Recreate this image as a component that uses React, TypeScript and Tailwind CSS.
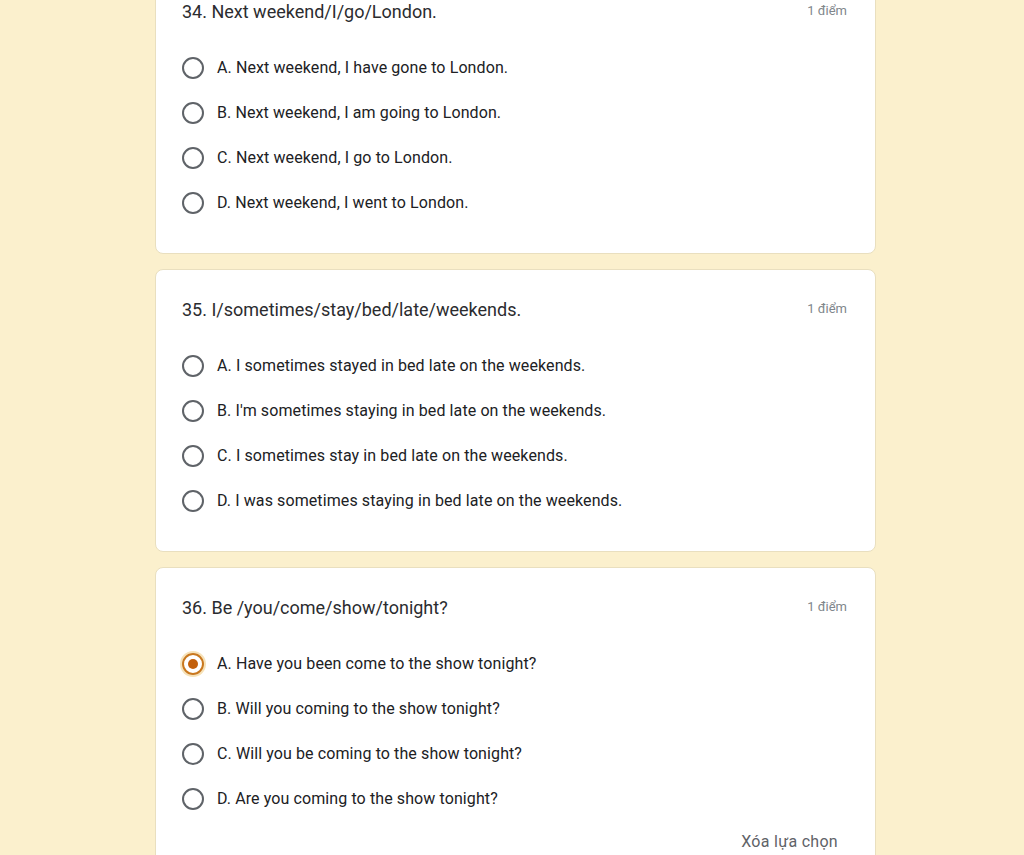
import React from 'react';

type Question = {
  title: string;
  options: string[];
  selected?: number;
};

const questions: Question[] = [
  {
    title: '34. Next weekend/I/go/London.',
    options: [
      'A. Next weekend, I have gone to London.',
      'B. Next weekend, I am going to London.',
      'C. Next weekend, I go to London.',
      'D. Next weekend, I went to London.',
    ],
  },
  {
    title: '35. I/sometimes/stay/bed/late/weekends.',
    options: [
      'A. I sometimes stayed in bed late on the weekends.',
      "B. I'm sometimes staying in bed late on the weekends.",
      'C. I sometimes stay in bed late on the weekends.',
      'D. I was sometimes staying in bed late on the weekends.',
    ],
  },
  {
    title: '36. Be /you/come/show/tonight?',
    options: [
      'A. Have you been come to the show tonight?',
      'B. Will you coming to the show tonight?',
      'C. Will you be coming to the show tonight?',
      'D. Are you coming to the show tonight?',
    ],
    selected: 0,
  },
];

const Radio: React.FC<{ checked: boolean }> = ({ checked }) =>
  checked ? (
    <span className="flex h-[22px] w-[22px] shrink-0 items-center justify-center rounded-full border-2 border-[#c9781e] shadow-[0_0_0_2px_#f6e2b8]">
      <span className="h-[10px] w-[10px] rounded-full bg-[#c2600c]" />
    </span>
  ) : (
    <span className="h-[22px] w-[22px] shrink-0 rounded-full border-2 border-[#5f6368]" />
  );

export default function App() {
  return (
    <div className="h-[855px] overflow-hidden bg-[#fbf0cd] font-['Roboto',sans-serif]">
      <div className="ml-[155px] mt-[-29px] flex w-[721px] flex-col gap-[15px]">
        {questions.map((q, qi) => (
          <div
            key={qi}
            className="rounded-[8px] border border-[#e9dfbf] bg-white pl-[26px] pr-[28px] pt-[27px] pb-[28px]"
          >
            <div className="flex h-[24px] items-center justify-between">
              <span className="text-[18px] text-[#2b2c2f]">{q.title}</span>
              <span className="text-[13px] text-[#80868b]">1 điểm</span>
            </div>
            <div className="mt-[22px] flex flex-col">
              {q.options.map((opt, oi) => (
                <div key={oi} className="flex h-[45px] items-center gap-[13px]">
                  <Radio checked={q.selected === oi} />
                  <span className="text-[16px] text-[#202124] tracking-[0.1px]">{opt}</span>
                </div>
              ))}
            </div>
            {q.selected !== undefined && (
              <div className="mt-[9px] flex justify-end pr-[9px]">
                <span className="text-[16px] text-[#5f6368] tracking-[0.3px]">Xóa lựa chọn</span>
              </div>
            )}
          </div>
        ))}
      </div>
    </div>
  );
}
